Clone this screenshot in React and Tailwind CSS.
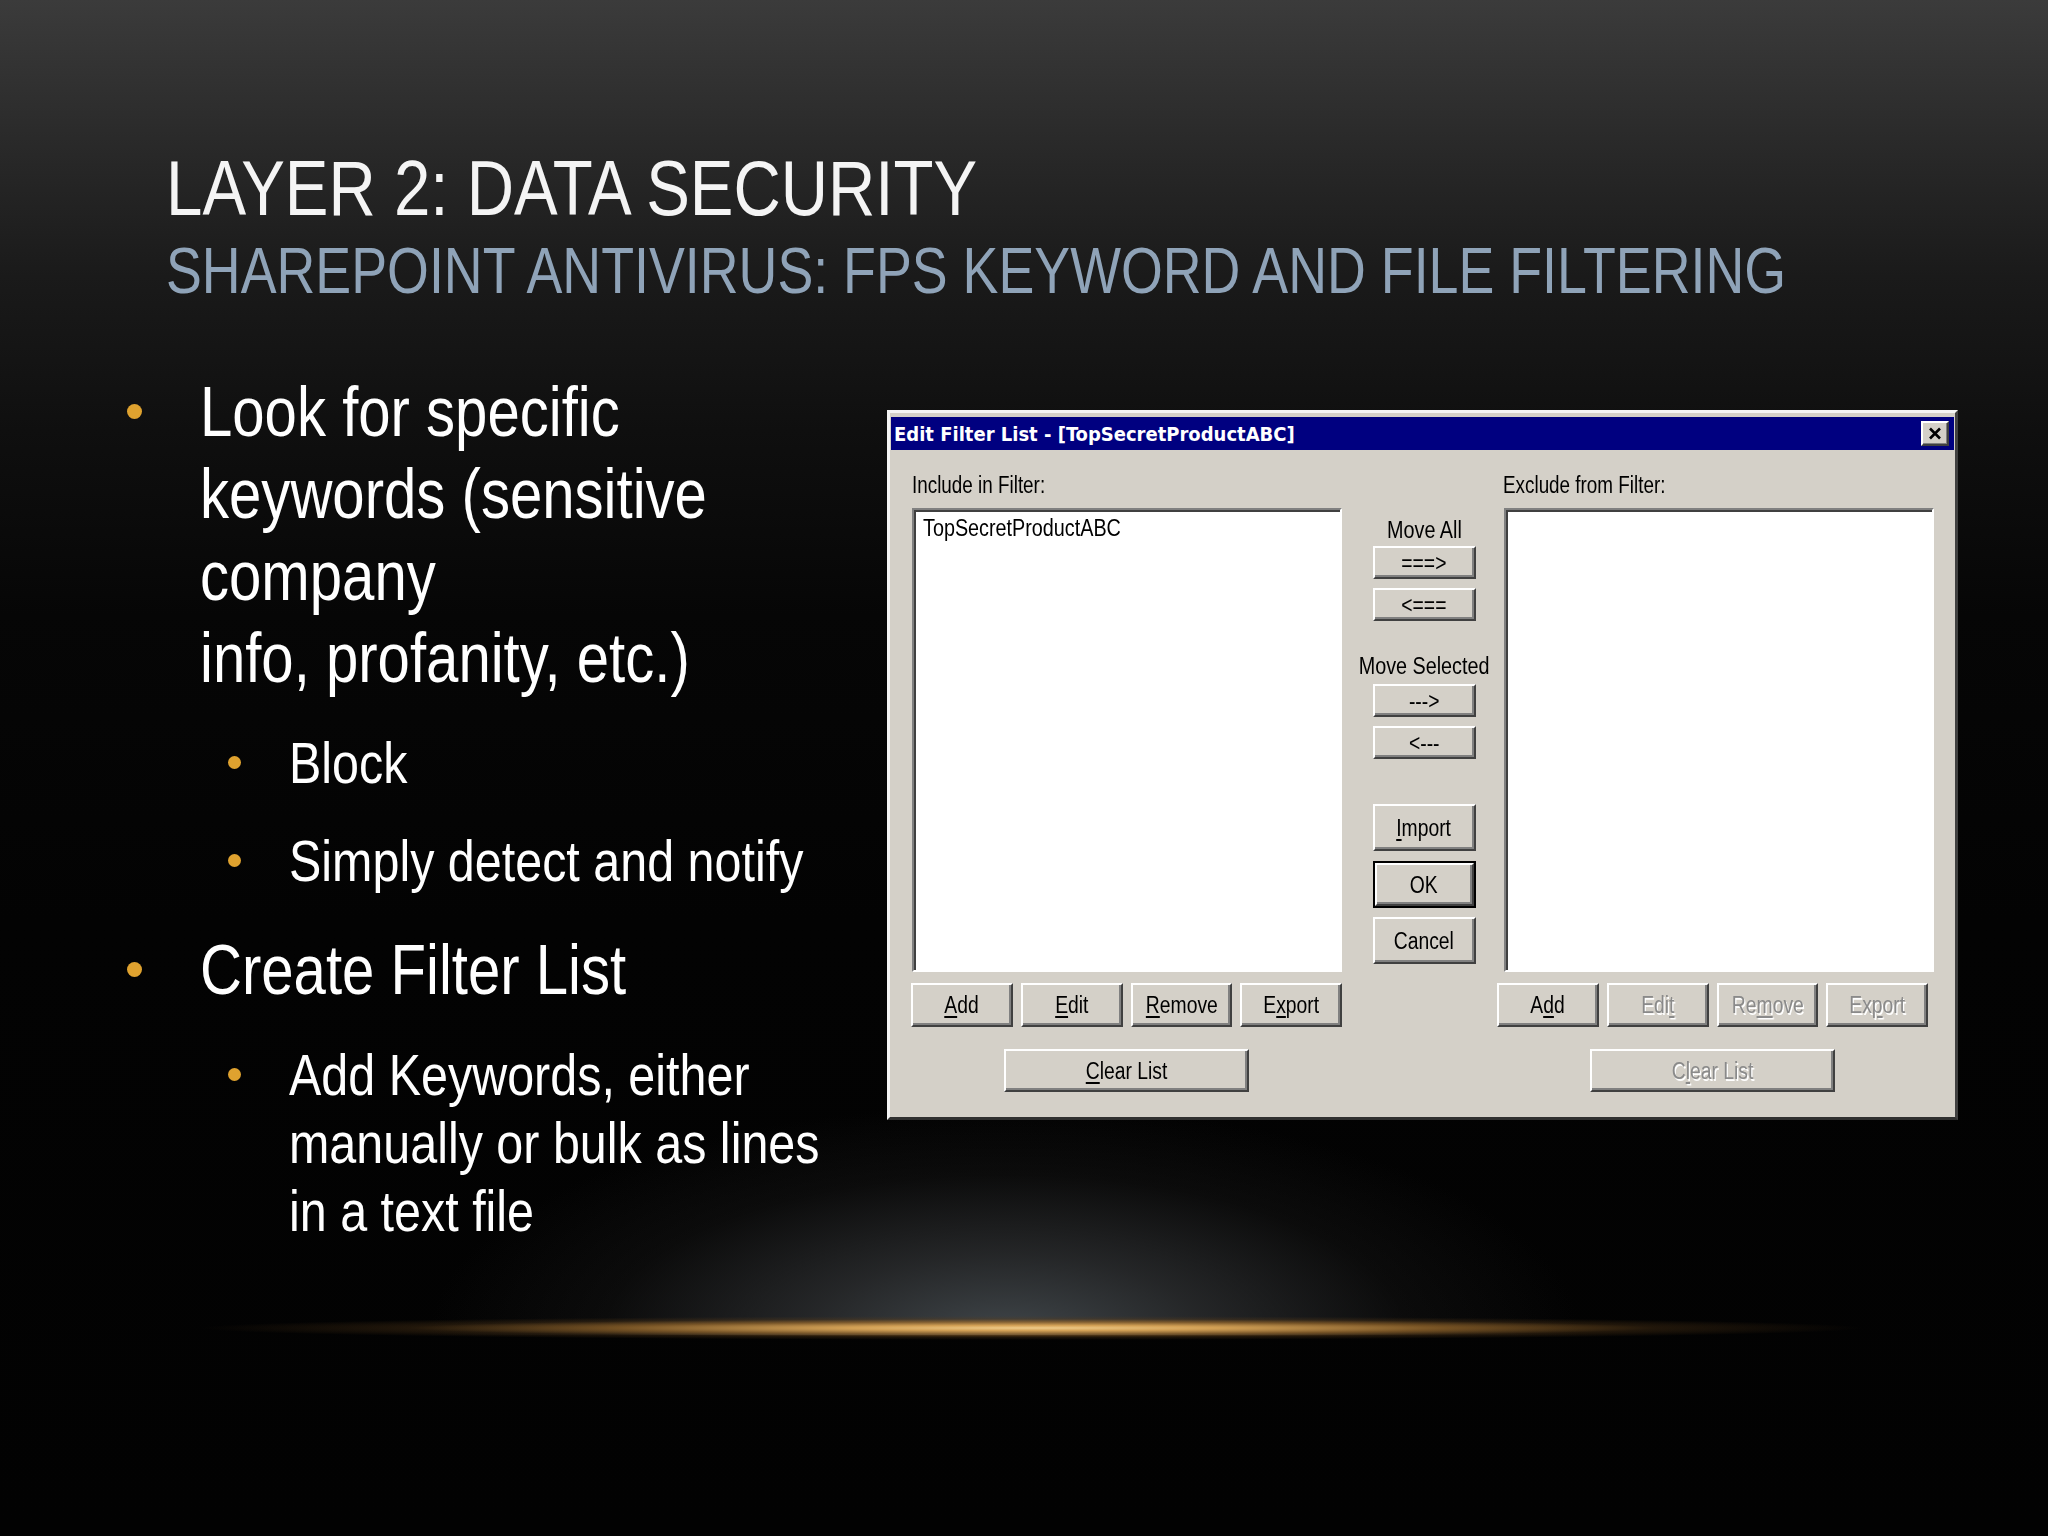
import React from 'react';

const SANS = "font-['Liberation_Sans','Arial',sans-serif]";

const SQUEEZE = {
  82: 'scale-x-[0.82]',
  83: 'scale-x-[0.83]',
  84: 'scale-x-[0.84]',
  85: 'scale-x-[0.85]',
  86: 'scale-x-[0.86]',
};

// Liberation Sans squeezed to the width of Arial Narrow
const N = ({ children, s = 82, className = '' }) => (
  <span className={`inline-block whitespace-nowrap ${SQUEEZE[s]} ${className}`}>{children}</span>
);

const U = ({ children }) => (
  <span className="underline decoration-[1.5px] underline-offset-[3px]">{children}</span>
);

const WinButton = ({ children, disabled = false, className = '' }) => (
  <div
    className={`flex items-center justify-center bg-[#d4d0c8] border-2 border-t-white border-l-white border-r-[#404040] border-b-[#404040] shadow-[inset_-2px_-2px_0_#808080] text-[23px] leading-[26px] ${
      disabled ? 'text-[#8a8a8a] [text-shadow:1.5px_1.5px_0_#ffffff]' : 'text-black'
    } ${className}`}
  >
    <N s={84}>{children}</N>
  </div>
);

const ListBox = ({ items = [] }) => (
  <div className="w-[430px] h-[464px] bg-white border-2 border-t-[#808080] border-l-[#808080] border-r-white border-b-white shadow-[inset_2px_2px_0_#404040] pt-[5px] pl-[9px] text-[23px] leading-[26px] text-black">
    {items.map((item) => (
      <div key={item}>
        <N s={86} className="origin-left">{item}</N>
      </div>
    ))}
  </div>
);

const ButtonRow = ({ disabled }) => (
  <div className="grid grid-cols-4 gap-x-[8px] w-[431px] h-[44px]">
    <WinButton>{disabled ? <>A<U>d</U>d</> : <><U>A</U>dd</>}</WinButton>
    <WinButton disabled={disabled}>{disabled ? <>Edi<U>t</U></> : <><U>E</U>dit</>}</WinButton>
    <WinButton disabled={disabled}>{disabled ? <>Re<U>m</U>ove</> : <><U>R</U>emove</>}</WinButton>
    <WinButton disabled={disabled}>{disabled ? <>Ex<U>p</U>ort</> : <>E<U>x</U>port</>}</WinButton>
  </div>
);

const FilterDialog = ({ className = '' }) => (
  <div
    className={`w-[1071px] h-[710px] shrink-0 flex flex-col bg-[#d4d0c8] border-[3px] border-t-[#f4f4f4] border-l-[#f4f4f4] border-r-[#404040] border-b-[#303030] pt-[4px] px-[1px] pb-[1px] ${className}`}
  >
    {/* title bar */}
    <div className="h-[33px] shrink-0 bg-[#000080] flex items-center justify-between pl-[3px] pr-[5px]">
      <span className="font-['DejaVu_Sans_Condensed','DejaVu_Sans',sans-serif] font-bold text-[20px] text-white">
        Edit Filter List - [TopSecretProductABC]
      </span>
      <div className="w-[28px] h-[25px] bg-[#d4d0c8] border-2 border-t-white border-l-white border-r-[#404040] border-b-[#404040] shadow-[inset_-1px_-1px_0_#808080] flex items-center justify-center">
        <svg width="14" height="13" viewBox="0 0 14 13">
          <path d="M2 1.5 L12 11.5 M12 1.5 L2 11.5" stroke="#000" strokeWidth="2.6" />
        </svg>
      </div>
    </div>

    {/* client area */}
    <div className="flex pt-[22px] pl-[20px]">
      {/* include column */}
      <div className="w-[431px] shrink-0 flex flex-col">
        <div className="h-[26px] text-[23px] leading-[26px] text-black pl-[1px]">
          <N className="origin-left">Include in Filter:</N>
        </div>
        <div className="mt-[10px] pl-[1px]">
          <ListBox items={['TopSecretProductABC']} />
        </div>
        <div className="mt-[11px]">
          <ButtonRow />
        </div>
        <div className="mt-[22px] flex justify-center">
          <WinButton className="w-[245px] h-[43px]">
            <U>C</U>lear List
          </WinButton>
        </div>
      </div>

      {/* move column */}
      <div className="w-[155px] shrink-0 flex flex-col items-center pl-[9px] text-[23px] leading-[26px] text-black">
        <div className="mt-[45px] h-[26px]">
          <N s={86}>Move All</N>
        </div>
        <WinButton className="mt-[3px] w-[103px] h-[33px]">===&gt;</WinButton>
        <WinButton className="mt-[9px] w-[103px] h-[33px]">&lt;===</WinButton>
        <div className="mt-[32px] h-[26px]">
          <N s={86}>Move Selected</N>
        </div>
        <WinButton className="mt-[5px] w-[103px] h-[33px]">---&gt;</WinButton>
        <WinButton className="mt-[9px] w-[103px] h-[33px]">&lt;---</WinButton>
        <WinButton className="mt-[45px] w-[103px] h-[47px]">
          <U>I</U>mport
        </WinButton>
        <div className="mt-[10px] w-[103px] h-[47px] border-2 border-black flex">
          <WinButton className="flex-1">OK</WinButton>
        </div>
        <WinButton className="mt-[9px] w-[103px] h-[47px]">Cancel</WinButton>
      </div>

      {/* exclude column */}
      <div className="w-[437px] shrink-0 flex flex-col">
        <div className="h-[26px] text-[23px] leading-[26px] text-black pl-[6px]">
          <N className="origin-left">Exclude from Filter:</N>
        </div>
        <div className="mt-[10px] pl-[7px]">
          <ListBox />
        </div>
        <div className="mt-[11px]">
          <ButtonRow disabled />
        </div>
        <div className="mt-[22px] w-[431px] flex justify-center">
          <WinButton disabled className="w-[245px] h-[43px]">
            C<U>l</U>ear List
          </WinButton>
        </div>
      </div>
    </div>
  </div>
);

const Dot = ({ size }) => (
  <span
    className={`block rounded-full bg-[#dfa22f] ${
      size === 'lg' ? 'w-[15px] h-[15px] mt-[33px]' : 'w-[13px] h-[13px] mt-[27px]'
    }`}
  />
);

const Bullet = ({ children, level = 1, className = '' }) =>
  level === 1 ? (
    <li className={`flex ${className}`}>
      <span className="w-[73px] shrink-0">
        <Dot size="lg" />
      </span>
      <div className="text-[70px] leading-[82px]">
        <N s={83} className="origin-left">{children}</N>
      </div>
    </li>
  ) : (
    <li className={`flex ml-[101px] ${className}`}>
      <span className="w-[61px] shrink-0">
        <Dot size="sm" />
      </span>
      <div className="text-[57px] leading-[68px]">
        <N s={85} className="origin-left">{children}</N>
      </div>
    </li>
  );

export default function App() {
  return (
    <div
      className={`relative w-[2048px] h-[1536px] overflow-hidden bg-[linear-gradient(180deg,#3b3b3b_0%,#2a2a2a_9%,#1a1a1a_18%,#0f0f0f_28%,#060606_40%,#030303_60%,#020202_100%)] ${SANS}`}
    >
      {/* bottom glow + gold horizon line */}
      <div className="absolute left-[430px] top-[1105px] w-[1150px] h-[230px] bg-[radial-gradient(ellipse_50%_100%_at_50%_100%,rgba(64,70,74,1)_0%,rgba(48,50,52,0.75)_35%,rgba(28,28,28,0.35)_70%,transparent_100%)]" />
      <div className="absolute left-[200px] top-[1316px] w-[1664px] h-[24px] bg-[radial-gradient(ellipse_50%_50%_at_50%_50%,#f0cc8a_0%,#d2a055_22%,rgba(160,110,45,0.7)_50%,rgba(90,60,25,0.35)_75%,transparent_100%)]" />

      <div className="relative pt-[150px] pl-[166px]">
        <h1 className="text-[77px] leading-[77px] text-[#f4f4f4]">
          <N s={85} className="origin-left">LAYER 2: DATA SECURITY</N>
        </h1>
        <h2 className="mt-[12px] text-[64px] leading-[64px] text-[#8fa3b8]">
          <N s={84} className="origin-left">SHAREPOINT ANTIVIRUS: FPS KEYWORD AND FILE FILTERING</N>
        </h2>
      </div>

      <div className="relative flex items-start mt-[68px]">
        <ul className="w-[887px] shrink-0 pl-[127px] text-white">
          <Bullet>
            Look for specific
            <br />
            keywords (sensitive
            <br />
            company
            <br />
            info, profanity, etc.)
          </Bullet>
          <Bullet level={2} className="mt-[30px]">Block</Bullet>
          <Bullet level={2} className="mt-[30px]">Simply detect and notify</Bullet>
          <Bullet className="mt-[34px]">Create Filter List</Bullet>
          <Bullet level={2} className="mt-[30px]">
            Add Keywords, either
            <br />
            manually or bulk as lines
            <br />
            in a text file
          </Bullet>
        </ul>
        <FilterDialog className="mt-[39px]" />
      </div>
    </div>
  );
}
